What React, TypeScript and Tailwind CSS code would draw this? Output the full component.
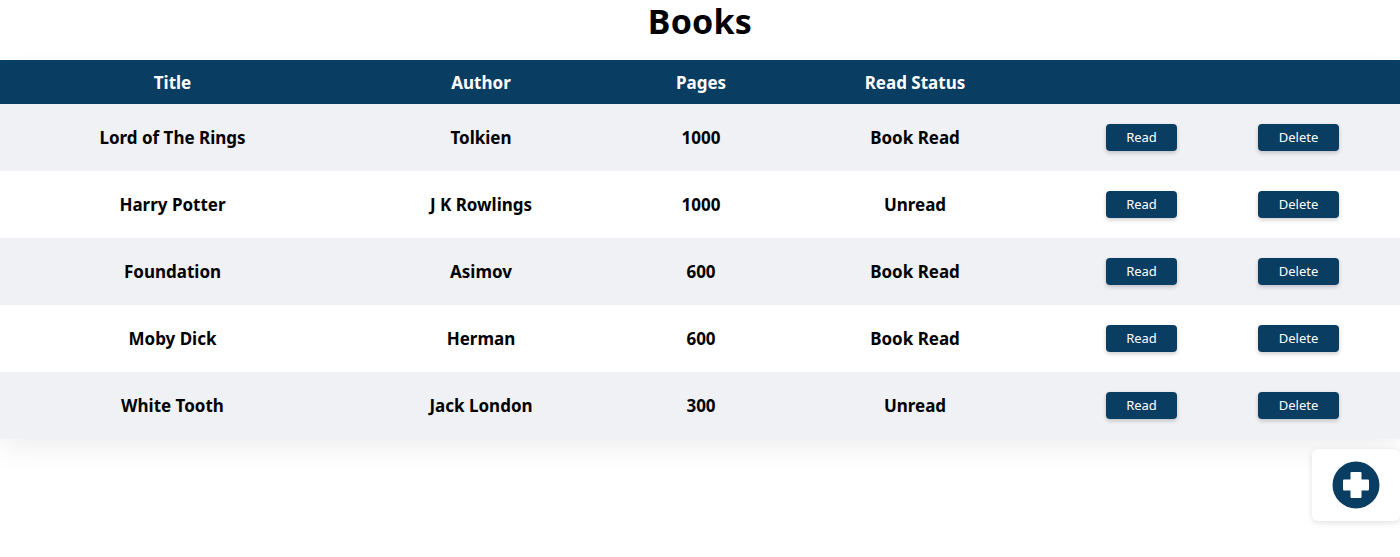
const books = [
  { title: 'Lord of The Rings', author: 'Tolkien', pages: 1000, status: 'Book Read' },
  { title: 'Harry Potter', author: 'J K Rowlings', pages: 1000, status: 'Unread' },
  { title: 'Foundation', author: 'Asimov', pages: 600, status: 'Book Read' },
  { title: 'Moby Dick', author: 'Herman', pages: 600, status: 'Book Read' },
  { title: 'White Tooth', author: 'Jack London', pages: 300, status: 'Unread' },
];

export default function App() {
  return (
    <div className="min-h-[557px] bg-white text-black" style={{ fontFamily: '"Noto Sans", sans-serif' }}>
      <div className="h-[60px]">
        <h1 className="text-center text-[34px] font-bold leading-[42px] tracking-[0.2px]">Books</h1>
      </div>
      <table className="w-full border-collapse table-fixed shadow-[0_12px_24px_rgba(0,0,0,0.06)]">
        <colgroup>
          <col className="w-[345px]" />
          <col className="w-[272px]" />
          <col className="w-[168px]" />
          <col className="w-[260px]" />
          <col className="w-[193px]" />
          <col className="w-[121px]" />
          <col className="w-[41px]" />
        </colgroup>
        <thead>
          <tr className="bg-[#0a3d62] text-white h-[44px]">
            <th className="text-[17px] font-bold pt-[2px]">Title</th>
            <th className="text-[17px] font-bold pt-[2px]">Author</th>
            <th className="text-[17px] font-bold pt-[2px]">Pages</th>
            <th className="text-[17px] font-bold pt-[2px]">Read Status</th>
            <th></th>
            <th></th>
            <th></th>
          </tr>
        </thead>
        <tbody>
          {books.map((b, i) => (
            <tr key={b.title} className={`h-[67px] ${i % 2 === 0 ? 'bg-[#f0f1f5]' : 'bg-white'}`}>
              <td className="text-center text-[17px] font-bold">{b.title}</td>
              <td className="text-center text-[17px] font-bold">{b.author}</td>
              <td className="text-center text-[17px] font-bold">{b.pages}</td>
              <td className="text-center text-[17px] font-bold">{b.status}</td>
              <td className="text-center">
                <button className="w-[71px] h-[27px] rounded-[4px] bg-[#0a3d62] text-white text-[13px] shadow-[0_2px_4px_rgba(0,0,0,0.2)]">Read</button>
              </td>
              <td className="text-center">
                <button className="w-[81px] h-[27px] rounded-[4px] bg-[#0a3d62] text-white text-[13px] shadow-[0_2px_4px_rgba(0,0,0,0.2)]">Delete</button>
              </td>
              <td></td>
            </tr>
          ))}
        </tbody>
      </table>
      <div className="flex justify-end mt-[10px]">
        <div className="w-[88px] h-[72px] rounded-[6px] bg-white shadow-[0_2px_6px_rgba(0,0,0,0.12)] flex items-center justify-center">
          <svg width="48" height="48" viewBox="0 0 48 48">
            <circle cx="24" cy="24" r="23.5" fill="#0a3d62" />
            <rect x="11" y="18.5" width="26" height="11" rx="1" fill="#fff" />
            <rect x="18.5" y="11" width="11" height="26" rx="1" fill="#fff" />
          </svg>
        </div>
      </div>
    </div>
  );
}
